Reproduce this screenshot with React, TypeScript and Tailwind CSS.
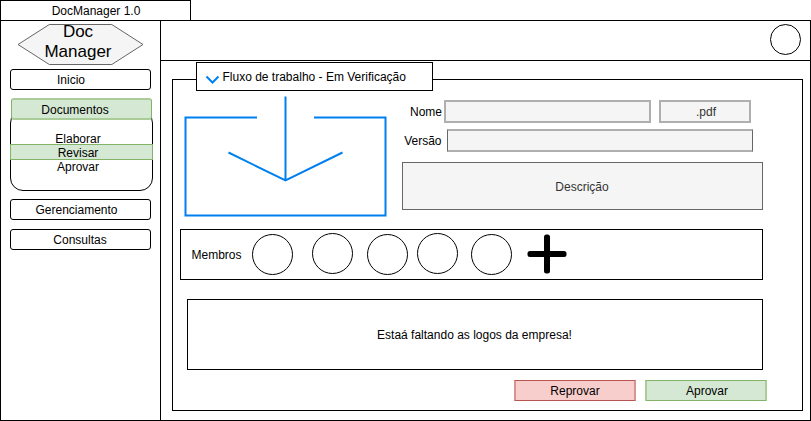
import type { ReactNode } from "react";

function NavItem({ children, className = "" }: { children: ReactNode; className?: string }) {
  return (
    <button className={`flex h-[21px] w-[141px] shrink-0 items-center justify-center rounded-[3px] border border-black bg-white ${className}`}>
      {children}
    </button>
  );
}

function Sidebar() {
  return (
    <nav className="flex w-[160px] shrink-0 flex-col items-start border-r border-black pl-[9px]">
      <div className="ml-[7px] mt-[2px] grid h-[43px] w-[128px] shrink-0">
        <svg className="col-start-1 row-start-1" width="128" height="43" viewBox="0 0 128 43">
          <polygon points="1,21.5 32.3,1.5 94.8,1.5 126,21.5 94.8,41.5 32.3,41.5" fill="#f5f5f5" stroke="#666666" />
        </svg>
        <h1 className="col-start-1 row-start-1 -mt-px pr-[6px] text-center text-[17px] leading-[20px]">
          Doc
          <br />
          Manager
        </h1>
      </div>
      <NavItem className="mt-[3px] pr-[19px]">Inicio</NavItem>
      <button className="relative z-10 ml-px mt-[8px] flex h-[22px] w-[141px] shrink-0 items-center justify-center rounded-[3px] border-x border-y-2 border-x-[#82b366] border-y-[#a9cc98] bg-[#d5e8d4] pr-[13px] pt-px">
        Documentos
      </button>
      <div className="-mt-[10px] flex h-[81px] w-[143px] shrink-0 flex-col rounded-[13px] border border-black pt-[21px] text-center">
        <div className="h-[12px] pr-[7px] leading-[14px]">Elaborar</div>
        <div className="-mx-px h-[16px] border border-[#82b366] bg-[#d5e8d4] pr-[7px] leading-[16px]">Revisar</div>
        <div className="pr-[7px] leading-[14px]">Aprovar</div>
      </div>
      <NavItem className="mt-[8px] pr-[8px]">Gerenciamento</NavItem>
      <NavItem className="mt-[9px] pr-[1px]">Consultas</NavItem>
    </nav>
  );
}

function ImportArrow() {
  return (
    <svg className="shrink-0" width="203" height="121" viewBox="0 0 203 121" fill="none" stroke="#0080f0" strokeWidth="2">
      <path d="M73 21.5H1.5V119.5H201.5V21.5H130" />
      <path d="M101.5 0.5V84.5M44.5 56.5L101.5 84.5L158.5 56.5" />
    </svg>
  );
}

function DocumentForm() {
  return (
    <div className="ml-[15px] flex flex-col pt-[4px]">
      <div className="flex h-[23px] items-center">
        <span className="w-[40px] text-right">Nome</span>
        <div className="ml-[2px] h-[23px] w-[207px] border-2 border-[#afafaf] bg-[#f5f5f5]" />
        <div className="ml-[8px] flex h-[23px] w-[92px] items-center justify-center border-2 border-[#afafaf] bg-[#f5f5f5] pl-[2px] text-[#333333]">
          .pdf
        </div>
      </div>
      <div className="mt-[6px] flex h-[23px] items-center">
        <span className="w-[40px] pr-[0.5px] text-right">Versão</span>
        <div className="ml-[5px] h-[23px] w-[306px] border-x border-y-2 border-x-[#666666] border-y-[#afafaf] bg-[#f5f5f5]" />
      </div>
      <div className="mt-[10px] flex h-[48px] w-[361px] items-center justify-center border border-[#666666] bg-[#f5f5f5] pr-px pt-[2px] text-[#333333]">
        Descrição
      </div>
    </div>
  );
}

function Member({ className }: { className: string }) {
  return <div className={`size-[41px] shrink-0 rounded-full border border-black ${className}`} />;
}

function Members() {
  return (
    <section className="ml-[7px] mt-[12px] flex h-[51px] w-[583px] shrink-0 items-start border border-black">
      <span className="ml-[10.5px] w-[60.5px] self-center">Membros</span>
      <Member className="mt-[4px]" />
      <Member className="ml-[19px] mt-[3px]" />
      <Member className="ml-[14px] mt-[4px]" />
      <Member className="ml-[9px] mt-[3px]" />
      <Member className="ml-[13px] mt-[4px]" />
      <svg className="ml-[15px] mt-[4px] shrink-0" width="40" height="40" viewBox="0 0 40 40">
        <rect x="17" y="0.5" width="6" height="39" rx="2.5" />
        <rect x="0.5" y="17" width="39" height="6" rx="2.5" />
      </svg>
    </section>
  );
}

function WorkflowPanel() {
  return (
    <main className="ml-[11px] mt-[18px] flex h-[332px] w-[631px] flex-col items-start border border-black">
      <h2 className="-mt-[18px] ml-[23px] flex h-[29px] w-[237px] shrink-0 items-center border border-black bg-white">
        <svg className="ml-[8px] mt-[7px]" width="15" height="10" viewBox="0 0 15 10" fill="none" stroke="#0080f0" strokeWidth="2">
          <path d="M1.5 1.5L7.5 7.5L13.5 1.5" />
        </svg>
        <span className="ml-[2.5px]">Fluxo de trabalho - Em Verificação</span>
      </h2>
      <div className="ml-[11px] mt-[5px] flex h-[121px] shrink-0">
        <ImportArrow />
        <DocumentForm />
      </div>
      <Members />
      <p className="ml-[14px] mt-[19px] flex h-[71px] w-[576px] shrink-0 items-center justify-center border border-black pr-px">
        Estaá faltando as logos da empresa!
      </p>
      <div className="ml-[341px] mt-[10px] flex gap-[9px]">
        <button className="flex h-[21px] w-[122px] items-center justify-center border-x-2 border-y border-x-[#d99492] border-y-[#b85450] bg-[#f8cecc]">
          Reprovar
        </button>
        <button className="flex h-[21px] w-[122px] items-center justify-center border-x-2 border-y border-x-[#abcd9c] border-y-[#82b366] bg-[#d5e8d4] pl-[2px]">
          Aprovar
        </button>
      </div>
    </main>
  );
}

export default function App() {
  return (
    <div className="flex h-[421px] w-[811px] flex-col overflow-hidden whitespace-nowrap bg-white font-['Liberation_Sans',Arial,sans-serif] text-[12px] leading-[14px] text-black">
      <div className="flex h-[21px] w-[191px] shrink-0 items-center justify-center border border-black pl-px">DocManager 1.0</div>
      <div className="-mt-px flex h-[401px] w-[811px] border border-black">
        <Sidebar />
        <div className="flex flex-1 flex-col">
          <header className="flex h-[40px] shrink-0 justify-end border-b border-black pr-[9px] pt-[3px]">
            <div className="size-[31px] rounded-full border border-black" />
          </header>
          <WorkflowPanel />
        </div>
      </div>
    </div>
  );
}
